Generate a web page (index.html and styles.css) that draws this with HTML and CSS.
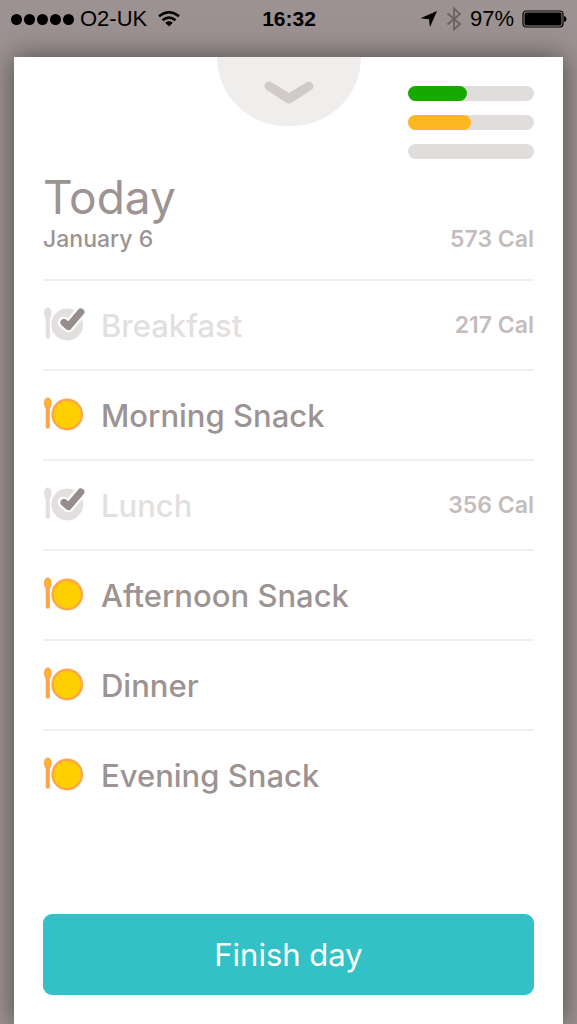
FILE: index.html
```html
<!DOCTYPE html>
<html lang="en">
<head>
  <meta charset="UTF-8">
  <meta name="viewport" content="width=device-width, initial-scale=1.0">
  <title>Today</title>
  <link rel="stylesheet" href="styles.css">
</head>
<body>
  <!-- shared icons -->
  <svg class="sprite" aria-hidden="true">
    <symbol id="plate" viewBox="0 0 42 36">
      <path d="M4.800 1.500C2.500 1.500 1 4 1 7C1 9.500 1.900 11.500 2.700 12.500V30.500Q2.700 32.800 4.800 32.800T6.900 30.500V12.500C7.700 11.500 8.600 9.500 8.600 7C8.600 4 7.100 1.500 4.800 1.500Z" fill="#ffa64d"/>
      <ellipse cx="4.800" cy="7" rx="1.500" ry="3.400" fill="#ffbb22"/>
      <circle cx="24.200" cy="18.500" r="14.700" fill="#ffcf00" stroke="#ffa64d" stroke-width="2.400"/>
    </symbol>
    <symbol id="plate-done" viewBox="0 0 42 36">
      <path d="M4.800 1.500C2.500 1.500 1 4 1 7C1 9.500 1.900 11.500 2.700 12.500V30.500Q2.700 32.800 4.800 32.800T6.900 30.500V12.500C7.700 11.500 8.600 9.500 8.600 7C8.600 4 7.100 1.500 4.800 1.500Z" fill="#e3dfde"/>
      <circle cx="24.200" cy="18.500" r="15.900" fill="#e3dfde"/>
      <path d="M20.500 16.500L25.500 20.500L37.500 6" fill="none" stroke="#fff" stroke-width="11.500" stroke-linecap="round" stroke-linejoin="round"/>
      <path d="M21 16.500L25.500 20.500L37.800 6" fill="none" stroke="#968d8c" stroke-width="7.200" stroke-linecap="round" stroke-linejoin="round"/>
    </symbol>
  </svg>

  <header class="status-bar">
    <div class="status-left">
      <div class="signal"><i></i><i></i><i></i><i></i><i></i></div>
      <span>O2-UK</span>
      <svg width="24" height="18" viewBox="0 0 24 18" fill="none" stroke="#000" stroke-width="2.600">
        <path d="M2 6.300Q12 -1.800 22 6.300"/>
        <path d="M5.500 10.300Q12 5 18.500 10.300"/>
        <path d="M12 16.500L8.200 12.700Q12 9.800 15.800 12.700Z" fill="#000" stroke="none"/>
      </svg>
    </div>
    <time class="clock">16:32</time>
    <div class="status-right">
      <svg width="18" height="18" viewBox="0 0 18 18">
        <path d="M17 1L10 17L9 9.200L0.500 8.200Z" fill="#000"/>
      </svg>
      <svg width="16" height="24" viewBox="0 0 16 24" fill="none" stroke="#6b6362" stroke-width="1.800">
        <path d="M1.500 6.500L14 17L8 22.500V1.500L14 7L1.500 17.500"/>
      </svg>
      <span>97%</span>
      <svg width="45" height="18" viewBox="0 0 45 18">
        <rect x="1" y="1" width="40" height="16" rx="3" fill="none" stroke="#000" stroke-width="1.200"/>
        <rect x="2.500" y="2.500" width="37" height="13" rx="1.500" fill="#000"/>
        <path d="M42 6Q44.500 6.500 44.500 9T42 12Z" fill="#000"/>
      </svg>
    </div>
  </header>

  <main class="card">
    <div class="card-top">
      <button class="pull-tab" type="button" aria-label="Close">
        <svg width="50" height="24" viewBox="0 0 50 24">
          <path d="M7.500 1.300L25 12L42.500 1.300A4.500 4.500 0 0 1 47.300 9L27.500 21.800Q25 23.400 22.500 21.800L2.700 9A4.500 4.500 0 0 1 7.500 1.300Z" fill="#d0caca"/>
        </svg>
      </button>
      <div class="bars">
        <div class="bar"><div class="fill green" style="width: 47%"></div></div>
        <div class="bar"><div class="fill orange" style="width: 50%"></div></div>
        <div class="bar"></div>
      </div>
    </div>

    <div class="heading">
      <div>
        <h1>Today</h1>
        <p class="date">January 6</p>
      </div>
      <span class="cal">573 Cal</span>
    </div>

    <ul class="meals">
      <li>
        <a class="meal done" href="#breakfast">
          <svg class="icon"><use href="#plate-done"/></svg>
          <span class="name">Breakfast</span>
          <span class="cal">217 Cal</span>
        </a>
      </li>
      <li>
        <a class="meal" href="#morning-snack">
          <svg class="icon"><use href="#plate"/></svg>
          <span class="name">Morning Snack</span>
        </a>
      </li>
      <li>
        <a class="meal done" href="#lunch">
          <svg class="icon"><use href="#plate-done"/></svg>
          <span class="name">Lunch</span>
          <span class="cal">356 Cal</span>
        </a>
      </li>
      <li>
        <a class="meal" href="#afternoon-snack">
          <svg class="icon"><use href="#plate"/></svg>
          <span class="name">Afternoon Snack</span>
        </a>
      </li>
      <li>
        <a class="meal" href="#dinner">
          <svg class="icon"><use href="#plate"/></svg>
          <span class="name">Dinner</span>
        </a>
      </li>
      <li>
        <a class="meal" href="#evening-snack">
          <svg class="icon"><use href="#plate"/></svg>
          <span class="name">Evening Snack</span>
        </a>
      </li>
    </ul>

    <button class="finish" type="button">Finish day</button>
  </main>
</body>
</html>
```

FILE: styles.css
```css
* {
  box-sizing: border-box;
  margin: 0;
  padding: 0;
}

body {
  display: flex;
  flex-direction: column;
  min-height: 100vh;
  background-color: #9c9291;
  font-family: Inter, "Open Sans", sans-serif;
  color: #9c9392;
}

.sprite {
  display: none;
}

/* phone status bar */
.status-bar {
  display: grid;
  grid-template-columns: 1fr auto 1fr;
  align-items: center;
  height: 38px;
  margin-bottom: 19px;
  padding: 0 10px 0 11px;
  font-family: "Liberation Sans", Arial, sans-serif;
  font-size: 22px;
  color: #000;
}

.status-left,
.status-right {
  display: flex;
  align-items: center;
  gap: 8px;
}

.status-left {
  gap: 6px;
}

.status-left svg {
  margin-left: 4px;
}

.status-right {
  justify-content: flex-end;
}

.signal {
  display: flex;
  gap: 2px;
}

.signal i {
  width: 11px;
  height: 11px;
  border-radius: 50%;
  background-color: #000;
}

.clock {
  font-size: 21px;
  font-weight: bold;
}

/* card */
.card {
  flex: 1;
  display: flex;
  flex-direction: column;
  margin: 0 14px;
  padding: 0 29px 29px;
  background-color: #fff;
  box-shadow: 0 0 26px rgba(0, 0, 0, 0.5);
}

.card-top {
  display: grid;
  grid-template-columns: 1fr 144px 1fr;
}

.pull-tab {
  grid-column: 2;
  height: 69px;
  padding-top: 5px;
  border: none;
  border-radius: 0 0 72px 72px;
  background-color: #f0eeed;
  cursor: pointer;
}

.bars {
  display: flex;
  flex-direction: column;
  gap: 14px;
  justify-self: end;
  width: 126px;
  padding-top: 29px;
}

.bar {
  height: 15px;
  border-radius: 8px;
  background-color: #e0dddc;
}

.fill {
  height: 100%;
  border-radius: 8px;
}

.green {
  background-color: #18a900;
}

.orange {
  background-color: #ffb71f;
}

.heading {
  display: flex;
  justify-content: space-between;
  align-items: flex-end;
  padding: 11px 0 26px;
}

h1 {
  font-size: 46px;
  font-weight: 400;
  line-height: 55px;
}

.date {
  font-size: 23px;
  font-weight: 500;
  line-height: 28px;
}

.cal {
  font-size: 23px;
  font-weight: 600;
  line-height: 28px;
  color: #c4bcbb;
}

/* meals */
.meals {
  list-style: none;
}

.meal {
  display: flex;
  align-items: center;
  height: 90px;
  border-top: 2px solid #f0eeee;
  color: #9c9392;
  text-decoration: none;
}

.icon {
  width: 42px;
  height: 36px;
  margin: 0 16px 2px 0;
}

.name {
  flex: 1;
  font-size: 31px;
  font-weight: 500;
}

.done .name {
  color: #e3dfde;
}

.finish {
  height: 81px;
  margin-top: auto;
  border: none;
  border-radius: 9px;
  background-color: #31c1c6;
  color: #fff;
  font-family: inherit;
  font-size: 31px;
  cursor: pointer;
}
```
